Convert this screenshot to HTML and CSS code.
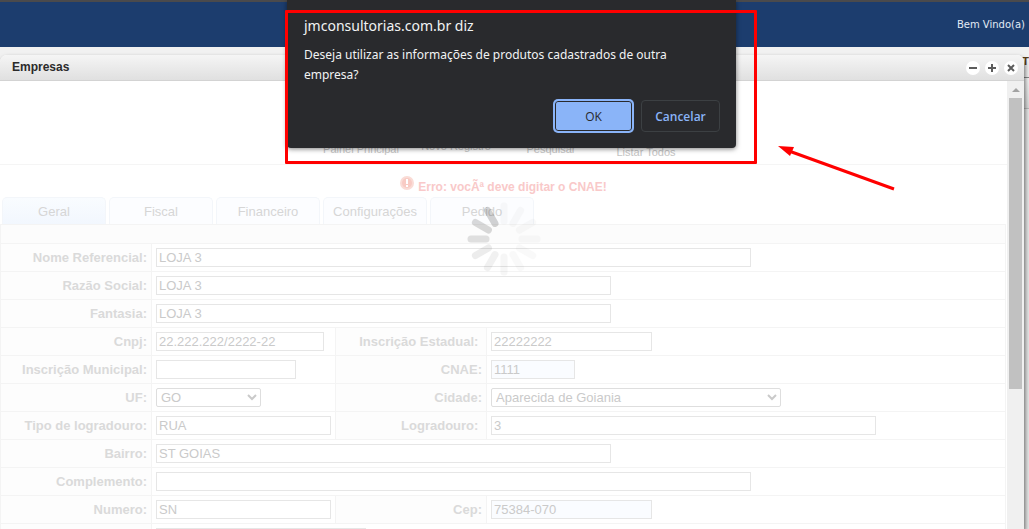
FILE: index.html
```html
<!DOCTYPE html>
<html lang="pt-BR">
<head>
<meta charset="UTF-8">
<meta name="viewport" content="width=device-width, initial-scale=1.0">
<title>Empresas</title>
<link rel="stylesheet" href="styles.css">
</head>
<body>
    <header class="topbar">Bem Vindo(a)</header>

    <!-- page behind the window -->
    <div class="page">
        <div class="page-head">T</div>
        <div class="page-bar"></div>
        <div class="page-body"></div>
    </div>

    <section class="window">
        <div class="window-title">
            <h1>Empresas</h1>
            <button type="button" aria-label="Minimizar"><svg viewBox="0 0 14 14"><path d="M3 7h8"/></svg></button>
            <button type="button" aria-label="Maximizar"><svg viewBox="0 0 14 14"><path d="M3 7h8M7 3v8"/></svg></button>
            <button type="button" aria-label="Fechar"><svg viewBox="0 0 14 14"><path d="M4 4l6 6M10 4l-6 6"/></svg></button>
        </div>

        <div class="window-body">
            <div class="content">
                <nav class="toolbar">
                    <a href="#">Painel Principal</a>
                    <a href="#" class="short">Novo Registro</a>
                    <a href="#">Pesquisar</a>
                    <a href="#" class="tall">Listar Todos</a>
                </nav>

                <p class="error">
                    <svg viewBox="0 0 14 14"><circle cx="7" cy="7" r="7" fill="#fadcd6"/><circle cx="7" cy="7" r="5" fill="#f8cbc4"/><path d="M7 3v5M7 9v2" stroke="#fff" stroke-width="2"/></svg>
                    Erro: vocÃª deve digitar o CNAE!
                </p>

                <div class="tabs">
                    <button type="button" class="active">Geral</button>
                    <button type="button">Fiscal</button>
                    <button type="button">Financeiro</button>
                    <button type="button">Configurações</button>
                    <button type="button">Pedido</button>
                </div>

                <form>
                <table class="form-table">
                    <colgroup><col class="col-label"><col class="col-field"><col class="col-label"><col></colgroup>
                    <tr class="head"><td colspan="4"></td></tr>
                    <tr>
                        <th><label for="nome">Nome Referencial:</label></th>
                        <td colspan="3"><input type="text" id="nome" class="w-full" value="LOJA 3"></td>
                    </tr>
                    <tr>
                        <th><label for="razao">Razão Social:</label></th>
                        <td colspan="3"><input type="text" id="razao" class="w-large" value="LOJA 3"></td>
                    </tr>
                    <tr>
                        <th><label for="fantasia">Fantasia:</label></th>
                        <td colspan="3"><input type="text" id="fantasia" class="w-large" value="LOJA 3"></td>
                    </tr>
                    <tr>
                        <th><label for="cnpj">Cnpj:</label></th>
                        <td><input type="text" id="cnpj" class="w-cnpj" value="22.222.222/2222-22"></td>
                        <th><label for="ie">Inscrição Estadual:&nbsp;</label></th>
                        <td><input type="text" id="ie" class="w-code" value="22222222"></td>
                    </tr>
                    <tr>
                        <th><label for="im">Inscrição Municipal:</label></th>
                        <td><input type="text" id="im" class="w-im"></td>
                        <th><label for="cnae">CNAE:</label></th>
                        <td><input type="text" id="cnae" class="w-cnae required" value="1111"></td>
                    </tr>
                    <tr>
                        <th><label for="uf">UF:</label></th>
                        <td><select id="uf" class="w-uf"><option>GO</option></select></td>
                        <th><label for="cidade">Cidade:</label></th>
                        <td><select id="cidade" class="w-city"><option>Aparecida de Goiania</option></select></td>
                    </tr>
                    <tr>
                        <th><label for="tipo">Tipo de logradouro:</label></th>
                        <td><input type="text" id="tipo" class="w-small" value="RUA"></td>
                        <th><label for="logradouro">Logradouro:&nbsp;</label></th>
                        <td><input type="text" id="logradouro" class="w-street" value="3"></td>
                    </tr>
                    <tr>
                        <th><label for="bairro">Bairro:</label></th>
                        <td colspan="3"><input type="text" id="bairro" class="w-large" value="ST GOIAS"></td>
                    </tr>
                    <tr>
                        <th><label for="complemento">Complemento:</label></th>
                        <td colspan="3"><input type="text" id="complemento" class="w-full"></td>
                    </tr>
                    <tr>
                        <th><label for="numero">Numero:</label></th>
                        <td><input type="text" id="numero" class="w-small" value="SN"></td>
                        <th><label for="cep">Cep:</label></th>
                        <td><input type="text" id="cep" class="w-code required" value="75384-070"></td>
                    </tr>
                    <tr>
                        <th></th>
                        <td colspan="3"><input type="text" class="w-phone" aria-label="Telefone"></td>
                    </tr>
                </table>
                </form>

                <svg class="spinner" viewBox="-38 -38 76 76" stroke="#000" stroke-width="7" stroke-linecap="round">
                    <path d="M0-18v-15" opacity=".02"/>
                    <path d="M0-18v-15" opacity=".02" transform="rotate(30)"/>
                    <path d="M0-18v-15" opacity=".02" transform="rotate(60)"/>
                    <path d="M0-18v-15" opacity=".02" transform="rotate(90)"/>
                    <path d="M0-18v-15" opacity=".02" transform="rotate(120)"/>
                    <path d="M0-18v-15" opacity=".02" transform="rotate(150)"/>
                    <path d="M0-18v-15" opacity=".03" transform="rotate(180)"/>
                    <path d="M0-18v-15" opacity=".05" transform="rotate(210)"/>
                    <path d="M0-18v-15" opacity=".07" transform="rotate(240)"/>
                    <path d="M0-18v-15" opacity=".11" transform="rotate(270)"/>
                    <path d="M0-18v-15" opacity=".14" transform="rotate(300)"/>
                    <path d="M0-18v-15" opacity=".17" transform="rotate(330)"/>
                </svg>
            </div>

            <div class="scrollbar">
                <svg viewBox="0 0 13 17"><path d="M3 11l4-4 4 4z" fill="#a3a3a3"/></svg>
                <div class="thumb"></div>
            </div>
        </div>
    </section>

    <div class="dialog" role="dialog" aria-labelledby="dialogTitle">
        <h2 id="dialogTitle">jmconsultorias.com.br diz</h2>
        <p>Deseja utilizar as informações de produtos cadastrados de outra empresa?</p>
        <div class="dialog-buttons">
            <button type="button" class="ok">OK</button>
            <button type="button" class="cancel">Cancelar</button>
        </div>
    </div>

    <!-- red marks -->
    <div class="mark-box"></div>
    <svg class="mark-arrow" viewBox="0 0 118 46"><path d="M11 5L116 43" stroke="#f00" stroke-width="3"/><path d="M0 0L16 1 12 10z" fill="#f00"/></svg>
</body>
</html>
```
FILE: styles.css
```css
* {
    margin: 0;
    padding: 0;
    box-sizing: border-box;
}
body {
    height: 100vh;
    display: flex;
    flex-direction: column;
    position: relative;
    overflow: hidden;
    background: #f1f1f1;
    font-family: "Liberation Sans", Arial, sans-serif;
    font-size: 13px;
}

/* top bar */
.topbar {
    height: 47px;
    padding-right: 4px;
    border-top: 2px solid #4a4a4c;
    background: #1c3d6e;
    color: #e3ebf5;
    font-family: "DejaVu Sans", Verdana, sans-serif;
    font-size: 10px;
    line-height: 45px;
    text-align: right;
}

/* page behind */
.page {
    flex: 1;
    display: flex;
    flex-direction: column;
}
.page-head {
    height: 31px;
    border-bottom: 1px solid #888;
    color: #5a3c14;
    font-size: 11px;
    font-weight: bold;
    line-height: 28px;
    text-align: right;
}
.page-bar {
    height: 31px;
    border-bottom: 1px solid #bbb;
    background: linear-gradient(#f6f6f6, #dcdcdc);
}
.page-body {
    flex: 1;
    background: #e8e8e8;
}

/* window */
.window {
    position: absolute;
    top: 55px;
    right: 5px;
    bottom: 0;
    left: 0;
    display: flex;
    flex-direction: column;
    border-radius: 7px 7px 0 0;
    background: #fff;
    box-shadow: 1px 3px 5px rgba(0, 0, 0, 0.6);
}
.window-title {
    display: flex;
    align-items: center;
    gap: 5px;
    height: 26px;
    padding: 0 6px 0 12px;
    border-bottom: 1px solid #d3d3d3;
    border-radius: 7px 7px 0 0;
    background: linear-gradient(#f5f5f5, #e0e0e0);
}
.window-title h1 {
    flex: 1;
    padding-bottom: 2px;
    color: #2b2b2b;
    font-size: 12px;
}
.window-title button {
    width: 14px;
    height: 14px;
    border: none;
    border-radius: 50%;
    background: #fff;
}
.window-title svg {
    display: block;
    width: 14px;
    height: 14px;
    stroke: #5c5c5c;
    stroke-width: 2;
}
.window-body {
    flex: 1;
    display: flex;
    min-height: 0;
}
.content {
    flex: 1;
    position: relative;
    overflow: hidden;
}

/* toolbar */
.toolbar {
    display: flex;
    justify-content: center;
    height: 84px;
    border-bottom: 1px solid #f5f5f5;
}
.toolbar a {
    width: 95px;
    padding-top: 61px;
    color: #c4c4c4;
    font-size: 11px;
    line-height: 14px;
    text-align: center;
    text-decoration: none;
}
.toolbar a.short {
    padding-top: 58px;
}
.toolbar a.tall {
    padding-top: 64px;
}
.error {
    display: flex;
    justify-content: center;
    gap: 4px;
    height: 32px;
    padding-top: 11px;
    color: #f9c9c9;
    font-size: 12px;
    font-weight: bold;
    line-height: 22px;
}
.error svg {
    width: 14px;
    height: 14px;
}

/* tabs */
.tabs {
    display: flex;
    gap: 3px;
    padding-left: 2px;
}
.tabs button {
    width: 104px;
    height: 27px;
    border: 1px solid #f3f6fa;
    border-bottom: none;
    border-radius: 5px 5px 0 0;
    background: #fcfdff;
    color: #d6d6d6;
    font-family: inherit;
    font-size: 13px;
}
.tabs .active {
    background: linear-gradient(#f9fcff, #f2f7fe);
}

/* form */
.form-table {
    width: calc(100% - 1px);
    table-layout: fixed;
    border-collapse: collapse;
}
.col-label {
    width: 151px;
}
.col-field {
    width: 184px;
}
.form-table th,
.form-table td {
    height: 28px;
    border: 1px solid #f4f4f4;
}
.form-table th {
    padding-right: 4px;
    background: #fdfdfd;
    color: #dadada;
    text-align: right;
}
.form-table td {
    padding-left: 4px;
}
.form-table .head td {
    height: 19px;
    background: #fcfcfc;
}
.form-table input,
.form-table select {
    display: block;
    height: 19px;
    border: 1px solid #e6e6e6;
    background: #fff;
    color: #cacaca;
    font-family: inherit;
    font-size: 13px;
}
.form-table input {
    padding: 0 2px;
}
.form-table select {
    border-color: #dedede;
    border-radius: 2px;
}
.form-table .required {
    background: #fafcff;
}
.w-full { width: 595px; }
.w-large { width: 455px; }
.w-street { width: 385px; }
.w-city { width: 290px; }
.w-phone { width: 210px; }
.w-small { width: 175px; }
.w-cnpj { width: 168px; }
.w-code { width: 161px; }
.w-im { width: 140px; }
.w-uf { width: 105px; }
.w-cnae { width: 84px; }

.spinner {
    position: absolute;
    top: 120px;
    left: calc(50% - 38px);
    width: 76px;
    height: 76px;
}

/* scrollbar */
.scrollbar {
    width: 17px;
    padding: 0 2px;
    background: #f0f0f0;
}
.scrollbar svg {
    display: block;
    width: 13px;
    height: 17px;
}
.thumb {
    height: 65%;
    background: #c1c1c1;
}

/* dialog */
.dialog {
    position: absolute;
    top: 0;
    left: 287px;
    width: 449px;
    padding: 16px;
    border-radius: 0 0 4px 4px;
    background: #292a2d;
    box-shadow: 0 1px 5px rgba(0, 0, 0, 0.5);
    color: #f1f3f4;
    font-family: "Noto Sans", "Segoe UI", sans-serif;
}
.dialog h2 {
    margin-bottom: 9px;
    padding-left: 1px;
    font-size: 14px;
    font-weight: normal;
    line-height: 20px;
}
.dialog p {
    padding: 0 32px 0 1px;
    font-size: 12px;
    line-height: 20px;
}
.dialog-buttons {
    display: flex;
    justify-content: flex-end;
    gap: 8px;
    margin-top: 15px;
}
.dialog-buttons button {
    width: 79px;
    height: 32px;
    border: 1px solid #3c4043;
    border-radius: 4px;
    background: #292a2d;
    color: #8ab4f8;
    font-family: "Open Sans", "Segoe UI", sans-serif;
    font-size: 12px;
    font-weight: 600;
}
.dialog-buttons .ok {
    border-color: #8ab4f8;
    background: #8ab4f8;
    box-shadow: 0 0 0 1px #8ab4f8, inset 0 0 0 1px #292a2d;
    color: #292a2d;
    font-weight: normal;
}

/* marks */
.mark-box {
    position: absolute;
    top: 10px;
    left: 285px;
    width: 472px;
    height: 154px;
    border: 3px solid #f00;
    border-radius: 1px;
}
.mark-arrow {
    position: absolute;
    top: 146px;
    left: 778px;
    width: 118px;
    height: 46px;
}
```
